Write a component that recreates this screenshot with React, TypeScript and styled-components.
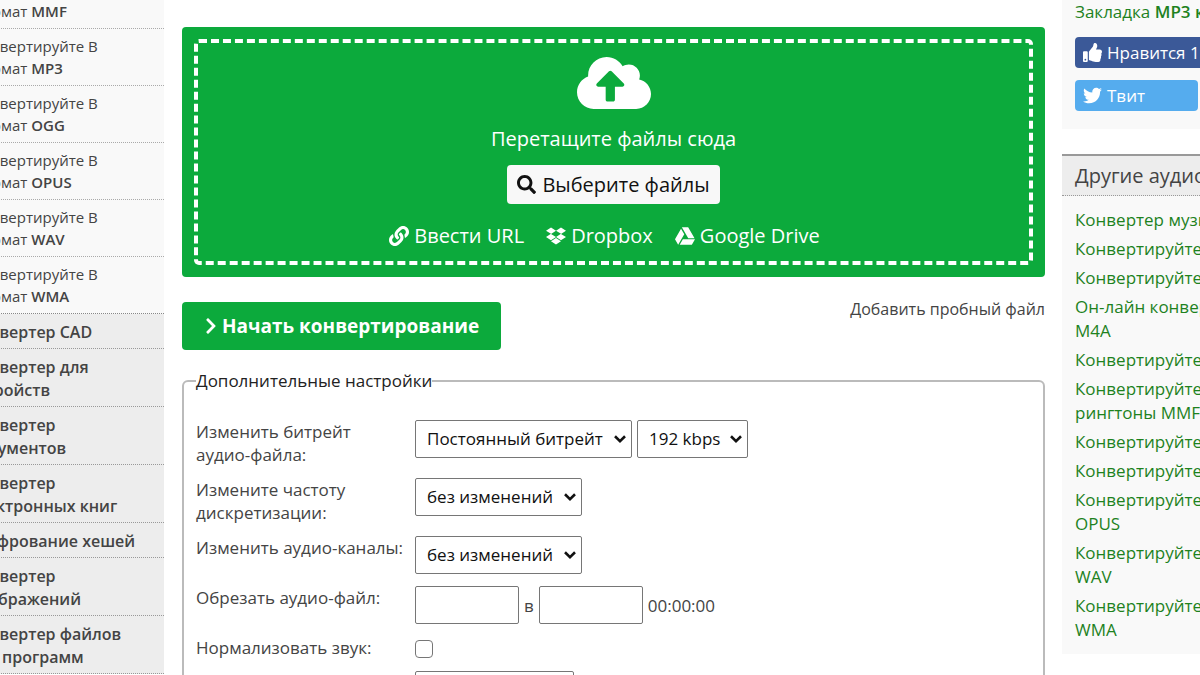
import React from "react";
import styled, { createGlobalStyle } from "styled-components";
import {
  FaChevronRight,
  FaCloudUploadAlt,
  FaDropbox,
  FaGoogleDrive,
  FaLink,
  FaSearch,
  FaThumbsUp,
  FaTwitter,
} from "react-icons/fa";

const GlobalStyle = createGlobalStyle`
  * { box-sizing: border-box; }
  body {
    margin: 0;
    background: #fff;
    color: #444;
    font: 17px/23px "Open Sans", "Noto Sans", sans-serif;
  }
  button, input, select { font: inherit; color: inherit; }
  a { color: inherit; text-decoration: none; }
`;

const Page = styled.div`
  display: grid;
  grid-template-columns: 164px minmax(0, 1fr) 138px;
  height: 100vh;
  overflow: hidden;
`;

/* Left navigation, partly scrolled out of view */
const Nav = styled.nav`
  width: 200px;
  margin-left: -36px;
  font-size: 15px;
  line-height: 22px;
`;

const NavList = styled.ul`
  margin: 0;
  padding: 0;
  list-style: none;
`;

const FormatItem = styled.li`
  padding: 6px 8px;
  background: #f9f9f9;
  border-bottom: 1px dotted #aaa;

  &:first-child { padding-top: 0; }
  &:last-child { border-bottom-color: #888; }
  b { font-weight: 600; }
`;

const CategoryItem = styled.li`
  padding: 7px 5px 4px;
  background: #ededed;
  border-bottom: 1px dotted #999;
  font-size: 16px;
  font-weight: 600;
  line-height: 23px;
`;

/* Centre column */
const Main = styled.main`
  padding: 27px 17px 0 18px;
`;

const DropZone = styled.section`
  padding: 12px;
  border-radius: 4px;
  background: #0caa3c;
  color: #fff;
  font-size: 20px;
  line-height: 28px;
`;

const DropFrame = styled.div`
  display: flex;
  flex-direction: column;
  align-items: center;
  padding: 10px 0 11px;
  border: 4px dashed #fff;
  border-radius: 5px;
`;

const CloudIcon = styled(FaCloudUploadAlt)`
  width: 74px;
  height: 60px;
`;

const DropHint = styled.p`
  margin: 12px 0;
`;

const ChooseButton = styled.button`
  display: flex;
  align-items: center;
  gap: 6px;
  height: 39px;
  padding: 0 10px;
  border: 0;
  border-radius: 4px;
  background: #f8f8f8;
  color: #111;
`;

const Sources = styled.div`
  display: flex;
  gap: 22px;
  margin-top: 18px;
  padding-right: 18px;
`;

const SourceLink = styled.a`
  display: flex;
  align-items: center;
  gap: 5px;
`;

const Actions = styled.div`
  display: flex;
  justify-content: space-between;
  align-items: flex-start;
  margin: 25px 0 19px;
`;

const StartButton = styled.button`
  display: flex;
  align-items: center;
  gap: 4px;
  height: 48px;
  padding: 0 22px;
  border: 0;
  border-radius: 4px;
  background: #0caa3c;
  color: #fff;
  font-size: 19px;
  font-weight: 700;
`;

const StartIcon = styled(FaChevronRight)`
  width: 14px;
  height: 18px;
`;

const SampleLink = styled.a`
  font-size: 16px;
  line-height: 14px;
`;

const Settings = styled.fieldset`
  margin: 0;
  padding: 28px 12px 20px;
  border: 2px solid #bbb;
  border-radius: 6px;
`;

const Legend = styled.legend`
  padding: 0;
  color: #222;
`;

const Field = styled.div`
  display: grid;
  grid-template-columns: 219px minmax(0, 1fr);
  align-items: start;
  margin-bottom: 12px;
`;

const FieldLabel = styled.label`
  white-space: pre-line;
`;

const Controls = styled.div`
  display: flex;
  align-items: center;
  gap: 5px;
`;

const SelectBox = styled.span<{ $width: number }>`
  position: relative;
  width: ${(p) => p.$width}px;

  svg {
    position: absolute;
    top: 15px;
    right: 6px;
    pointer-events: none;
  }
`;

const Select = styled.select`
  display: block;
  width: 100%;
  height: 38px;
  padding: 0 11px 2px;
  border: 1px solid #767676;
  border-radius: 2px;
  background: #fff;
  color: #111;
  appearance: none;
`;

const TimeInput = styled.input`
  width: 104px;
  height: 38px;
  padding: 0 11px;
  border: 1px solid #767676;
  border-radius: 2px;
`;

const Checkbox = styled.input`
  width: 18px;
  height: 18px;
  margin: 4px 0 1px;
  border: 1px solid #767676;
  border-radius: 4px;
  background: #fff;
  appearance: none;

  &:checked { background: #0caa3c; }
`;

/* Right column, wider than the visible area */
const Aside = styled.aside`
  width: 280px;
  color: #1e821e;
`;

const SharePanel = styled.section`
  display: flex;
  flex-direction: column;
  gap: 12px;
  padding: 0 13px 18px;
  background: #f9f9f9;

  b { font-weight: 600; }
`;

const ShareText = styled.a`
  padding-bottom: 2px;
`;

const ShareButton = styled.button<{ $color: string; $width: number }>`
  display: flex;
  align-items: center;
  gap: 5px;
  width: ${(p) => p.$width}px;
  height: 31px;
  padding: 0 8px;
  border: 0;
  border-radius: 4px;
  background: ${(p) => p.$color};
  color: #fff;
`;

const LinksPanel = styled.section`
  margin-top: 25px;
  border-top: 2px solid #999;
  background: #f9f9f9;
`;

const LinksTitle = styled.h2`
  margin: 0;
  padding: 6px 13px;
  border-bottom: 1px dotted #999;
  background: #ededed;
  color: #444;
  font-size: 20px;
  font-weight: 400;
  line-height: 27px;
`;

const LinksList = styled.ul`
  display: flex;
  flex-direction: column;
  gap: 5px;
  margin: 0;
  padding: 12px 13px;
  list-style: none;
  line-height: 24px;
  white-space: pre;
`;

const formats = ["MMF", "MP3", "OGG", "OPUS", "WAV", "WMA"];

const categories = [
  ["Конвертер CAD"],
  ["Конвертер для", "устройств"],
  ["Конвертер", "документов"],
  ["Конвертер", "электронных книг"],
  ["Шифрование хешей"],
  ["Конвертер", "изображений"],
  ["Конвертер файлов", "для программ"],
];

const converters = [
  "Конвертер музыки в AAC",
  "Конвертируйте аудио в AIFF",
  "Конвертируйте аудио в FLAC",
  "Он-лайн конвертер\nM4A",
  "Конвертируйте видео в MP3",
  "Конвертируйте\nрингтоны MMF",
  "Конвертируйте аудио в MP3",
  "Конвертируйте аудио в OGG",
  "Конвертируйте аудио\nOPUS",
  "Конвертируйте аудио\nWAV",
  "Конвертируйте аудио\nWMA",
];

function Dropdown(props: { id: string; width: number; options: string[]; label?: string }) {
  return (
    <SelectBox $width={props.width}>
      <Select id={props.id} aria-label={props.label}>
        {props.options.map((option) => (
          <option key={option}>{option}</option>
        ))}
      </Select>
      <svg width="12" height="8" viewBox="0 0 12 8" fill="none" stroke="#111" strokeWidth="2.6" aria-hidden="true">
        <path d="M1 1.3 6 6.1 11 1.3" />
      </svg>
    </SelectBox>
  );
}

export default function App() {
  return (
    <>
      <GlobalStyle />
      <Page>
        <Nav>
          <NavList>
            {formats.map((format, i) => (
              <FormatItem key={format}>
                <a href="#">
                  {i > 0 && (
                    <>
                      Конвертируйте В<br />
                    </>
                  )}
                  формат <b>{format}</b>
                </a>
              </FormatItem>
            ))}
          </NavList>
          <NavList>
            {categories.map((lines) => (
              <CategoryItem key={lines.join(" ")}>
                <a href="#">
                  {lines[0]}
                  {lines[1] && <br />}
                  {lines[1]}
                </a>
              </CategoryItem>
            ))}
          </NavList>
        </Nav>

        <Main>
          <DropZone>
            <DropFrame>
              <CloudIcon />
              <DropHint>Перетащите файлы сюда</DropHint>
              <ChooseButton type="button">
                <FaSearch size={19} />
                Выберите файлы
              </ChooseButton>
              <Sources>
                <SourceLink href="#">
                  <FaLink size={20} />
                  Ввести URL
                </SourceLink>
                <SourceLink href="#">
                  <FaDropbox size={20} />
                  Dropbox
                </SourceLink>
                <SourceLink href="#">
                  <FaGoogleDrive size={20} />
                  Google Drive
                </SourceLink>
              </Sources>
            </DropFrame>
          </DropZone>

          <Actions>
            <StartButton type="button">
              <StartIcon />
              Начать конвертирование
            </StartButton>
            <SampleLink href="#">Добавить пробный файл</SampleLink>
          </Actions>

          <Settings>
            <Legend>Дополнительные настройки</Legend>
            <Field>
              <FieldLabel htmlFor="bitrate">{"Изменить битрейт\nаудио-файла:"}</FieldLabel>
              <Controls>
                <Dropdown id="bitrate" width={217} options={["Постоянный битрейт"]} />
                <Dropdown id="kbps" width={111} options={["192 kbps"]} label="kbps" />
              </Controls>
            </Field>
            <Field>
              <FieldLabel htmlFor="rate">{"Измените частоту\nдискретизации:"}</FieldLabel>
              <Dropdown id="rate" width={167} options={["без изменений"]} />
            </Field>
            <Field>
              <FieldLabel htmlFor="channels">Изменить аудио-каналы:</FieldLabel>
              <Dropdown id="channels" width={167} options={["без изменений"]} />
            </Field>
            <Field>
              <FieldLabel htmlFor="trim-from">Обрезать аудио-файл:</FieldLabel>
              <Controls>
                <TimeInput id="trim-from" type="text" />
                <label htmlFor="trim-to">в</label>
                <TimeInput id="trim-to" type="text" />
                <span>00:00:00</span>
              </Controls>
            </Field>
            <Field>
              <FieldLabel htmlFor="normalize">Нормализовать звук:</FieldLabel>
              <Checkbox id="normalize" type="checkbox" />
            </Field>
            <Field>
              <span />
              <Dropdown id="preset" width={159} options={[""]} label="preset" />
            </Field>
          </Settings>
        </Main>

        <Aside>
          <SharePanel>
            <ShareText href="#">
              Закладка <b>MP3 конвертер</b>
            </ShareText>
            <ShareButton type="button" $color="#3b5998" $width={180}>
              <FaThumbsUp size={19} />
              Нравится 15K
            </ShareButton>
            <ShareButton type="button" $color="#55acee" $width={123}>
              <FaTwitter size={19} />
              Твит
            </ShareButton>
          </SharePanel>
          <LinksPanel>
            <LinksTitle>Другие аудиоконвертеры</LinksTitle>
            <LinksList>
              {converters.map((name) => (
                <li key={name}>
                  <a href="#">{name}</a>
                </li>
              ))}
            </LinksList>
          </LinksPanel>
        </Aside>
      </Page>
    </>
  );
}
